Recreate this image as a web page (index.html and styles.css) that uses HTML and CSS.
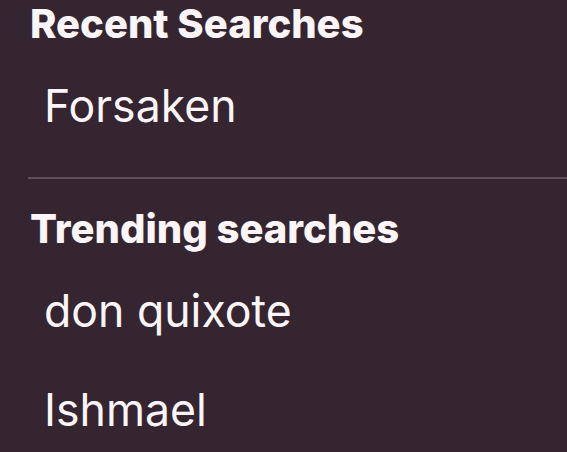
FILE: index.html
```html
<!DOCTYPE html>
<html lang="en">
<head>
    <meta charset="UTF-8">
    <meta name="viewport" content="width=device-width, initial-scale=1.0">
    <title>Search</title>
    <link rel="stylesheet" href="styles.css">
</head>
<body>

    <div class="search-panel">
        <div class="section">
            <h2 class="section-title">Recent Searches</h2>
            <ul class="search-list">
                <li>Forsaken</li>
            </ul>
        </div>

        <div class="divider"></div>

        <div class="section">
            <h2 class="section-title">Trending searches</h2>
            <ul class="search-list">
                <li>don quixote</li>
                <li>Ishmael</li>
            </ul>
        </div>
    </div>

</body>
</html>
```

FILE: styles.css
```css
body {
    font-family: Inter, "Noto Sans", sans-serif;
    margin: 0;
    padding: 0;
    background: #352530;
    color: #fbf5f8;
}
.search-panel {
    padding: 0 0 0 30px;
}
.section-title {
    font-size: 40px;
    font-weight: 800;
    margin: 0;
    line-height: 48px;
}
.search-list {
    list-style: none;
    margin: 9px 0 0;
    padding: 0 0 0 14px;
}
.search-list li {
    font-size: 44.6px;
    line-height: 99px;
}
.divider {
    height: 2px;
    background: #5d505a;
    margin: 21px 0 26px -2px;
}
```
